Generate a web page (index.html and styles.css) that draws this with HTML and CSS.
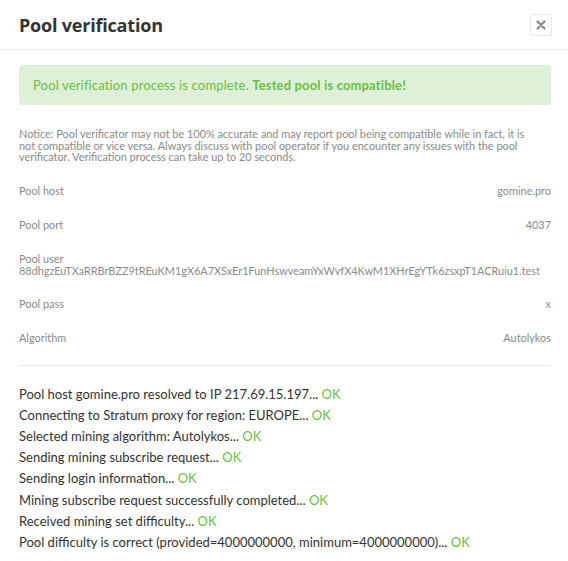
FILE: index.html
```html
<!DOCTYPE html>
<html>
<head>
<meta charset="utf-8">
<link rel="stylesheet" href="styles.css">
</head>
<body>
<div class="modal">
  <div class="modal-header">
    <h4 class="title">Pool verification</h4>
    <button class="close" aria-label="Close">
      <svg width="10" height="10" viewBox="0 0 10 10"><path d="M1.5 1.5 L8.5 8.5 M8.5 1.5 L1.5 8.5" stroke="#8a8a8a" stroke-width="2.2" stroke-linecap="round"/></svg>
    </button>
  </div>
  <div class="modal-body">
    <div class="alert">Pool verification process is complete. <b>Tested pool is compatible!</b></div>
    <p class="notice">Notice: Pool verificator may not be 100% accurate and may report pool being compatible while in fact, it is not compatible or vice versa. Always discuss with pool operator if you encounter any issues with the pool verificator. Verification process can take up to 20 seconds.</p>
    <div class="props">
      <div class="row"><span>Pool host</span><span>gomine.pro</span></div>
      <div class="row"><span>Pool port</span><span>4037</span></div>
      <div class="row stack"><span>Pool user</span><span>88dhgzEuTXaRRBrBZZ9tREuKM1gX6A7XSxEr1FunHswveamYxWvfX4KwM1XHrEgYTk6zsxpT1ACRuiu1.test</span></div>
      <div class="row"><span>Pool pass</span><span>x</span></div>
      <div class="row"><span>Algorithm</span><span>Autolykos</span></div>
    </div>
    <div class="log">
      <div>Pool host gomine.pro resolved to IP 217.69.15.197... <span class="ok">OK</span></div>
      <div>Connecting to Stratum proxy for region: EUROPE... <span class="ok">OK</span></div>
      <div>Selected mining algorithm: Autolykos... <span class="ok">OK</span></div>
      <div>Sending mining subscribe request... <span class="ok">OK</span></div>
      <div>Sending login information... <span class="ok">OK</span></div>
      <div>Mining subscribe request successfully completed... <span class="ok">OK</span></div>
      <div>Received mining set difficulty... <span class="ok">OK</span></div>
      <div>Pool difficulty is correct (provided=4000000000, minimum=4000000000)... <span class="ok">OK</span></div>
    </div>
  </div>
</div>
</body>
</html>
```
FILE: styles.css
```css
html, body {
  margin: 0;
  padding: 0;
  background: #fff;
}
body {
  font-family: Lato, "Open Sans", sans-serif;
  color: #333;
}
.modal {
  width: 568px;
}
.modal-header {
  display: flex;
  align-items: center;
  justify-content: space-between;
  height: 50px;
  box-sizing: border-box;
  padding: 0 16px 0 19px;
  border-bottom: 1px solid #e9e9e9;
}
.title {
  margin: 0;
  font-family: "Open Sans", sans-serif;
  font-size: 18px;
  font-weight: 700;
  color: #333;
  letter-spacing: -0.2px;
}
.close {
  width: 22px;
  height: 22px;
  padding: 0;
  border: 1px solid #e6e6e6;
  border-radius: 3px;
  background: #fff;
  display: flex;
  align-items: center;
  justify-content: center;
  margin-top: 1px;
}
.modal-body {
  padding: 15px 17px 0 19px;
}
.alert {
  background: #dff0d8;
  color: #6abf40;
  border-radius: 3px;
  height: 40px;
  display: flex;
  align-items: center;
  padding: 0 14px;
  font-size: 13px;
  letter-spacing: 0.15px;
  white-space: pre;
}
.alert b {
  font-weight: 700;
}
.notice {
  margin: 23px 0 0 0;
  padding-right: 17px;
  font-size: 10.9px;
  line-height: 11.5px;
  color: #8a8a8a;
}
.props {
  margin-top: 17px;
  padding-bottom: 4px;
  border-bottom: 1px solid #e9e9e9;
}
.row {
  display: flex;
  justify-content: space-between;
  font-size: 10.9px;
  line-height: 12px;
  color: #8a8a8a;
  padding: 5px 0 17px;
}
.row.stack {
  flex-direction: column;
  padding-bottom: 16px;
}
.log {
  margin-top: 18px;
  font-size: 13px;
  line-height: 21.2px;
  color: #333;
}
.ok {
  color: #6abf40;
}
```
